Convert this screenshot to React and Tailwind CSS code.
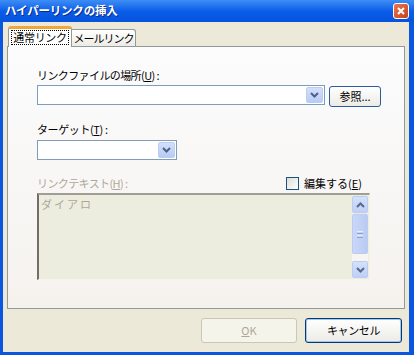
import React from 'react';

const FONT = { fontFamily: '"Noto Sans CJK JP", "Liberation Sans", sans-serif' };

const Chevron = ({ up = false, color = '#4D6185' }) => (
  <svg width="9" height="6" viewBox="0 0 9 6">
    <path d={up ? 'M1 5 L4.5 1.5 L8 5' : 'M1 1 L4.5 4.5 L8 1'} stroke={color} strokeWidth="2" fill="none" />
  </svg>
);

const Combo = ({ width }) => (
  <div className={`${width} h-[20px] border border-[#7F9DB9] bg-white flex justify-end p-[1px]`}>
    <div className="w-[17px] h-full rounded-[2px] border border-[#BCCDF3] bg-gradient-to-b from-[#D3E0FB] to-[#B8CBF4] flex items-center justify-center">
      <Chevron />
    </div>
  </div>
);

const ScrollBtn = ({ up }) => (
  <div className="h-[17px] rounded-[2px] border border-[#BACCF3] bg-gradient-to-b from-[#D5E1FA] to-[#BFCFF5] flex items-center justify-center">
    <Chevron up={up} color="#56698F" />
  </div>
);

export default function App() {
  return (
    <div style={FONT} className="w-[414px] h-[355px] bg-[#0A56E0] flex flex-col overflow-hidden">
      {/* title bar */}
      <div className="h-[22px] shrink-0 flex items-center justify-between pl-[5px] pr-[5px] bg-gradient-to-b from-[#3D8DF5] via-[#0A5DE8] to-[#0653DC]">
        <span className="text-white text-[11.5px] font-bold leading-none tracking-[-0.2px] [text-shadow:1px_1px_0_#0A2A8C]">
          ハイパーリンクの挿入
        </span>
        <div className="w-[16px] h-[16px] rounded-[3px] border border-white bg-gradient-to-br from-[#E8764E] to-[#C8401C] flex items-center justify-center">
          <svg width="8" height="8" viewBox="0 0 8 8">
            <path d="M1 1 L7 7 M7 1 L1 7" stroke="white" strokeWidth="2" />
          </svg>
        </div>
      </div>

      {/* body */}
      <div className="flex-1 ml-[3px] mr-[5px] mb-[3px] bg-[#ECE9D8] flex flex-col text-[11px] text-black">
        {/* tabs */}
        <div className="h-[24px] shrink-0 flex items-end pl-[5px] whitespace-nowrap">
          <div className="relative z-10 h-[21px] -mb-px w-[64px] bg-white border-x border-[#919B9C] border-t-[3px] border-t-[#F2A53A] rounded-t-[3px] flex items-start justify-center pt-[1px]">
            <span className="border border-dotted border-black px-[1px] leading-[13px] tracking-[-0.3px]">通常リンク</span>
          </div>
          <div className="h-[17px] w-[64px] border-t border-r border-[#919B9C] rounded-tr-[3px] bg-gradient-to-b from-white to-[#ECEBE5] flex items-center justify-center leading-none tracking-[-1px]">
            メールリンク
          </div>
        </div>

        {/* tab panel */}
        <div className="mx-[4px] h-[263px] border border-[#919B9C] bg-gradient-to-b from-[#FCFCFD] to-[#F5F2EE] pl-[29px] pt-[21px] flex flex-col whitespace-nowrap">
          <div className="h-[14px] leading-[14px] tracking-[-0.6px]">
            リンクファイルの場所(<span className="underline">U</span>) :
          </div>
          <div className="mt-[3px] flex items-start gap-[4px]">
            <Combo width="w-[288px]" />
            <div className="mt-[1px] w-[52px] h-[21px] rounded-[3px] border border-[#2A5C9E] bg-gradient-to-b from-white to-[#ECEBE6] flex items-center justify-center leading-none">
              参照...
            </div>
          </div>

          <div className="mt-[15px] h-[14px] leading-[14px] tracking-[-0.4px]">
            ターゲット(<span className="underline">T</span>) :
          </div>
          <div className="mt-[4px]">
            <Combo width="w-[140px]" />
          </div>

          <div className="mt-[16px] w-[333px] h-[14px] flex items-center justify-between">
            <span className="text-[#ACA899] tracking-[-0.6px] leading-[14px]">
              リンクテキスト(<span className="underline">H</span>) :
            </span>
            <div className="flex items-center gap-[5px] mr-[8px]">
              <div className="w-[13px] h-[13px] border border-[#1C5180] bg-gradient-to-br from-[#DCDCD7] to-white" />
              <span className="leading-[14px]">
                編集する(<span className="underline">E</span>)
              </span>
            </div>
          </div>

          <div className="mt-[3px] w-[333px] h-[87px] bg-[#ECECDF] border-t-2 border-l-2 border-t-[#9E9E94] border-l-[#716F64] border-r border-b border-r-[#F4F4EE] border-b-[#F4F4EE] flex">
            <div className="flex-1 pl-[2px] pt-[2px] text-[#ACA899] tracking-[2px] leading-[14px]">ダイアロ</div>
            <div className="w-[16px] mr-[1px] pt-[1px] pb-[1px] flex flex-col">
              <ScrollBtn up />
              <div className="mt-[1px] h-[40px] rounded-[2px] border border-[#BACCF3] bg-gradient-to-r from-[#C9D7F8] to-[#BACBF3] flex flex-col items-center justify-center gap-[1px]">
                <div className="w-[6px] h-px bg-[#E8EEFC]" />
                <div className="w-[6px] h-px bg-[#8EA4D6]" />
                <div className="w-[6px] h-px bg-[#E8EEFC]" />
                <div className="w-[6px] h-px bg-[#8EA4D6]" />
              </div>
              <div className="flex-1 bg-[#F6F5F0]" />
              <ScrollBtn />
            </div>
          </div>
        </div>

        {/* buttons */}
        <div className="mt-[9px] flex justify-end gap-[8px] pr-[7px]">
          <div className="w-[96px] h-[25px] rounded-[3px] border border-[#C9C7BA] bg-[#F5F4EA] text-[#ACA899] flex items-center justify-center leading-none">
            <span><span className="underline">O</span>K</span>
          </div>
          <div className="w-[97px] h-[25px] rounded-[3px] border border-[#003C74] bg-gradient-to-b from-white to-[#ECEBE6] shadow-[inset_0_0_0_1px_#A8C4EE] flex items-center justify-center leading-none tracking-[-0.4px]">
            キャンセル
          </div>
        </div>
      </div>
    </div>
  );
}
